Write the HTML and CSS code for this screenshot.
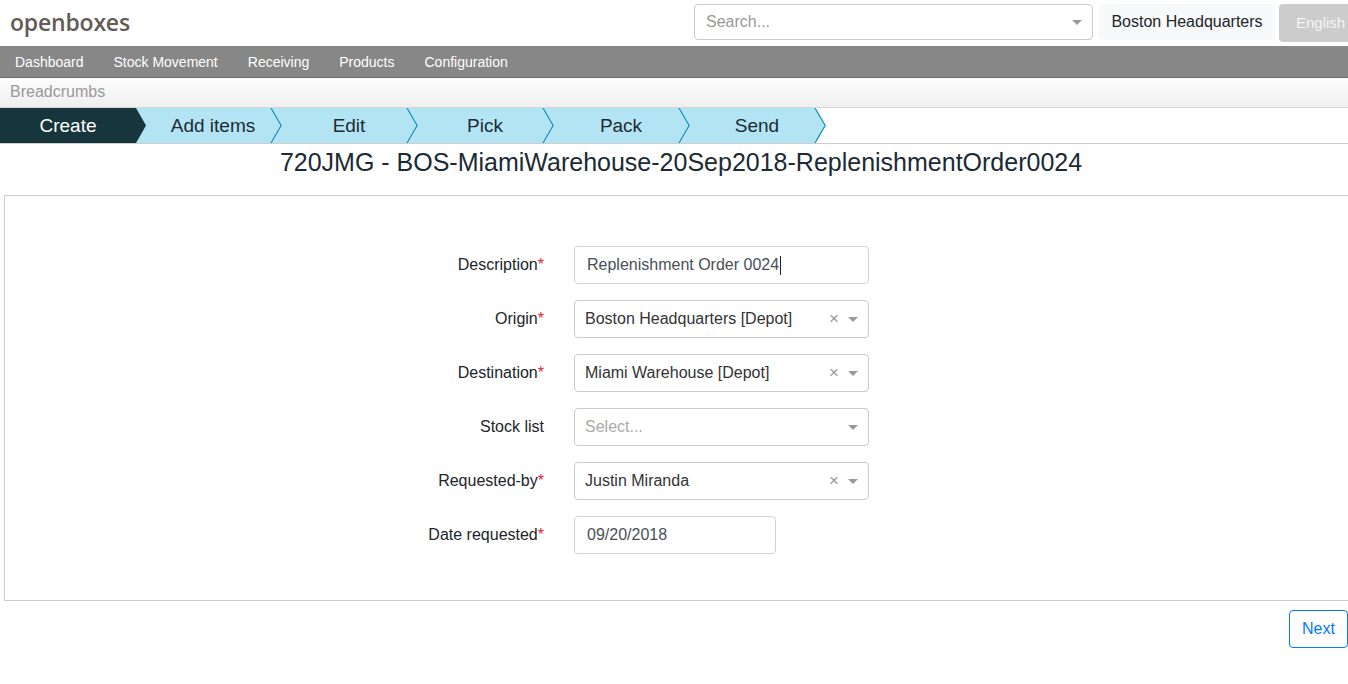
FILE: index.html
```html
<!DOCTYPE html>
<html>
<head>
<meta charset="utf-8">
<link rel="stylesheet" href="styles.css">
</head>
<body>
<header class="topbar">
  <div class="logo">openboxes</div>
  <div class="top-right">
    <div class="search">
      <span class="search-ph">Search...</span>
      <span class="caret"></span>
    </div>
    <div class="loc-btn">Boston Headquarters</div>
    <div class="lang-btn">English</div>
  </div>
</header>
<nav class="menu">
  <a>Dashboard</a>
  <a>Stock Movement</a>
  <a>Receiving</a>
  <a>Products</a>
  <a>Configuration</a>
</nav>
<div class="crumbs">Breadcrumbs</div>
<div class="steps">
  <div class="step step-active">Create</div>
  <div class="step">Add items<svg class="chev" width="146" height="35" viewBox="0 0 146 35"><polyline points="135,0 145.2,17.5 135,35" fill="none" stroke="#1a8fb4" stroke-width="1.3"/></svg></div>
  <div class="step">Edit<svg class="chev" width="146" height="35" viewBox="0 0 146 35"><polyline points="135,0 145.2,17.5 135,35" fill="none" stroke="#1a8fb4" stroke-width="1.3"/></svg></div>
  <div class="step">Pick<svg class="chev" width="146" height="35" viewBox="0 0 146 35"><polyline points="135,0 145.2,17.5 135,35" fill="none" stroke="#1a8fb4" stroke-width="1.3"/></svg></div>
  <div class="step">Pack<svg class="chev" width="146" height="35" viewBox="0 0 146 35"><polyline points="135,0 145.2,17.5 135,35" fill="none" stroke="#1a8fb4" stroke-width="1.3"/></svg></div>
  <div class="step">Send<svg class="chev" width="146" height="35" viewBox="0 0 146 35"><polyline points="135,0 145.2,17.5 135,35" fill="none" stroke="#1a8fb4" stroke-width="1.3"/></svg></div>
</div>
<h1 class="title">720JMG - BOS-MiamiWarehouse-20Sep2018-ReplenishmentOrder0024</h1>
<form class="panel">
  <div class="row">
    <label class="lbl">Description<span class="req">*</span></label>
    <div class="input text-input">Replenishment Order 0024<span class="cursor"></span></div>
  </div>
  <div class="row">
    <label class="lbl">Origin<span class="req">*</span></label>
    <div class="input select"><span class="val">Boston Headquarters [Depot]</span><span class="clear">×</span><span class="caret"></span></div>
  </div>
  <div class="row">
    <label class="lbl">Destination<span class="req">*</span></label>
    <div class="input select"><span class="val">Miami Warehouse [Depot]</span><span class="clear">×</span><span class="caret"></span></div>
  </div>
  <div class="row">
    <label class="lbl">Stock list</label>
    <div class="input select"><span class="val ph">Select...</span><span class="caret"></span></div>
  </div>
  <div class="row">
    <label class="lbl">Requested-by<span class="req">*</span></label>
    <div class="input select"><span class="val">Justin Miranda</span><span class="clear">×</span><span class="caret"></span></div>
  </div>
  <div class="row">
    <label class="lbl">Date requested<span class="req">*</span></label>
    <div class="input text-input date">09/20/2018</div>
  </div>
</form>
<div class="actions">
  <button class="next-btn" type="button">Next</button>
</div>
</body>
</html>
```

FILE: styles.css
```css
html, body {
  margin: 0;
  padding: 0;
  overflow: hidden;
}
body {
  font-family: "Liberation Sans", Arial, sans-serif;
  color: #212529;
  background: #fff;
  width: 1348px;
}
.topbar {
  height: 46px;
  display: flex;
  align-items: center;
  justify-content: space-between;
}
.logo {
  font-family: "Open Sans", sans-serif;
  font-weight: 600;
  font-size: 23px;
  color: #645b55;
  padding-left: 10px;
  letter-spacing: -0.2px;
  margin-top: -3px;
}
.top-right {
  display: flex;
  align-items: flex-start;
  height: 46px;
  padding-top: 4px;
  box-sizing: border-box;
}
.search {
  width: 399px;
  height: 36px;
  box-sizing: border-box;
  border: 1px solid #ccc;
  border-radius: 4px;
  display: flex;
  align-items: center;
  justify-content: space-between;
  padding: 0 10px 0 11px;
}
.search-ph {
  color: #999;
  font-size: 16px;
}
.caret {
  width: 0;
  height: 0;
  border-left: 5px solid transparent;
  border-right: 5px solid transparent;
  border-top: 5px solid #999;
}
.loc-btn {
  margin-left: 6px;
  height: 36px;
  width: 176px;
  box-sizing: border-box;
  background: #f8f9fa;
  border-radius: 4px;
  font-size: 16px;
  color: #212529;
  display: flex;
  align-items: center;
  justify-content: center;
}
.lang-btn {
  margin-left: 4px;
  height: 38px;
  width: 69px;
  box-sizing: border-box;
  background: #cccccc;
  border-radius: 4px 0 0 4px;
  color: #f4f4f4;
  font-size: 15px;
  padding: 0 0 2px 17px;
  display: flex;
  align-items: center;
}
.menu {
  height: 32px;
  background: #878787;
  border-bottom: 1px solid #6f6f6f;
  box-sizing: border-box;
  display: flex;
  align-items: center;
}
.menu a {
  color: #fff;
  font-size: 14px;
  padding: 0 15px;
}
.crumbs {
  height: 30px;
  box-sizing: border-box;
  background: linear-gradient(#fdfdfd, #efefef);
  border-bottom: 1px solid #d6d6d6;
  color: #999;
  font-size: 16px;
  padding: 5px 0 0 10px;
}
.steps {
  height: 36px;
  display: flex;
  border-bottom: 1px solid #cccccc;
  box-sizing: border-box;
}
.step {
  position: relative;
  flex: none;
  width: 146px;
  margin-right: -10px;
  height: 35px;
  box-sizing: border-box;
  padding: 0 9px 0 17px;
  background: #b2e4f4;
  clip-path: polygon(0 0, 136px 0, 146px 50%, 136px 100%, 0 100%);
  display: flex;
  align-items: center;
  justify-content: center;
  font-size: 19px;
  color: #1d2b33;
}
.step-active {
  background: #17353c;
  color: #fff;
  padding: 0 10px 0 0;
}
.step:nth-child(1) { z-index: 6; }
.step:nth-child(2) { z-index: 5; }
.step:nth-child(3) { z-index: 4; }
.step:nth-child(4) { z-index: 3; }
.step:nth-child(5) { z-index: 2; }
.step:nth-child(6) { z-index: 1; }
.chev {
  position: absolute;
  left: 0;
  top: 0;
}
.title {
  margin: 0;
  height: 40px;
  padding-top: 4px;
  box-sizing: border-box;
  text-align: center;
  font-weight: normal;
  font-size: 25px;
  color: #1b2a35;
  padding-left: 14px;
}
.panel {
  margin: 11px -6px 0 4px;
  border: 1px solid #cccccc;
  padding: 50px 0 46px 0;
  display: flex;
  flex-direction: column;
  gap: 16px;
}
.row {
  display: flex;
  align-items: center;
}
.lbl {
  width: 539px;
  text-align: right;
  font-size: 16px;
  color: #212529;
  margin-right: 30px;
}
.req {
  color: #e4252e;
}
.input {
  width: 295px;
  height: 38px;
  box-sizing: border-box;
  border: 1px solid #cccccc;
  border-radius: 4px;
  display: flex;
  align-items: center;
  font-size: 16px;
}
.text-input {
  border-color: #ced4da;
  padding-left: 12px;
  color: #495057;
}
.cursor {
  display: inline-block;
  width: 1px;
  height: 19px;
  background: #222;
  margin-left: 1px;
}
.date {
  width: 202px;
}
.select {
  padding: 0 10px 0 10px;
  color: #333;
}
.select .val {
  flex: 1;
}
.select .ph {
  color: #aaa;
}
.clear {
  color: #999;
  font-size: 17px;
  margin-right: 9px;
}
.actions {
  display: flex;
  justify-content: flex-end;
  padding-top: 9px;
}
.next-btn {
  width: 59px;
  height: 38px;
  border: 1px solid #007bff;
  border-radius: 4px;
  background: #fff;
  color: #007bff;
  font-family: "Liberation Sans", Arial, sans-serif;
  font-size: 16px;
  padding: 0;
}
```
